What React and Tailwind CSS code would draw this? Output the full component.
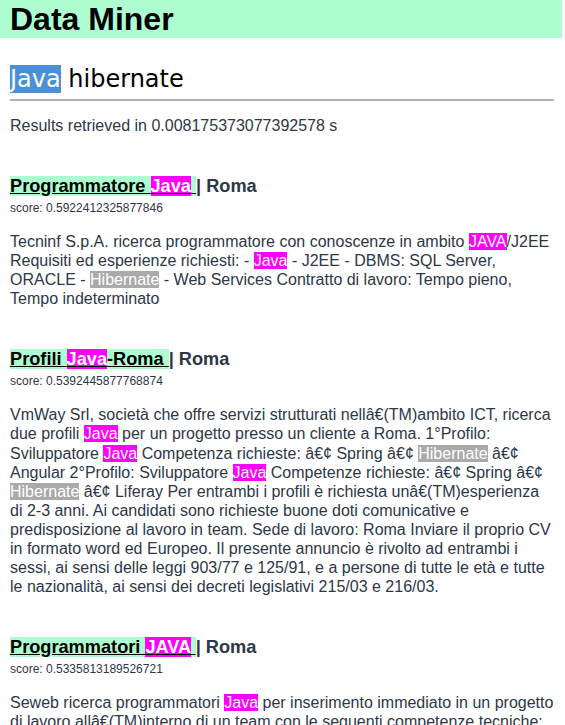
import React from 'react';

const results = [
  {
    title: [['Programmatore '], ['Java', 'hit'], [' ']],
    city: 'Roma',
    score: '0.5922412325877846',
    body: [
      ['Tecninf S.p.A. ricerca programmatore con conoscenze in ambito '],
      ['JAVA', 'hit'],
      ['/J2EE Requisiti ed esperienze richiesti: - '],
      ['Java', 'hit'],
      [' - J2EE - DBMS: SQL Server, ORACLE - '],
      ['Hibernate', 'alt'],
      [' - Web Services Contratto di lavoro: Tempo pieno, Tempo indeterminato'],
    ],
  },
  {
    title: [['Profili '], ['Java', 'hit'], ['-Roma ']],
    city: 'Roma',
    score: '0.5392445877768874',
    body: [
      ['VmWay Srl, società che offre servizi strutturati nellâ€(TM)ambito ICT, ricerca due profili '],
      ['Java', 'hit'],
      [' per un progetto presso un cliente a Roma. 1°Profilo: Sviluppatore '],
      ['Java', 'hit'],
      [' Competenza richieste: â€¢ Spring â€¢ '],
      ['Hibernate', 'alt'],
      [' â€¢ Angular 2°Profilo: Sviluppatore '],
      ['Java', 'hit'],
      [' Competenze richieste: â€¢ Spring â€¢ '],
      ['Hibernate', 'alt'],
      [' â€¢ Liferay Per entrambi i profili è richiesta unâ€(TM)esperienza di 2-3 anni. Ai candidati sono richieste buone doti comunicative e predisposizione al lavoro in team. Sede di lavoro: Roma Inviare il proprio CV in formato word ed Europeo. Il presente annuncio è rivolto ad entrambi i sessi, ai sensi delle leggi 903/77 e 125/91, e a persone di tutte le età e tutte le nazionalità, ai sensi dei decreti legislativi 215/03 e 216/03.'],
    ],
  },
  {
    title: [['Programmatori '], ['JAVA', 'hit'], [' ']],
    city: 'Roma',
    score: '0.5335813189526721',
    body: [
      ['Seweb ricerca programmatori '],
      ['Java', 'hit'],
      [' per inserimento immediato in un progetto di lavoro allâ€(TM)interno di un team con le seguenti competenze tecniche: Java, J2EE, Spring, Hibernate, SQL'],
    ],
  },
];

const Piece = ({ text, kind }) => {
  if (kind === 'hit') return <span className="bg-[#ff00ff] text-white">{text}</span>;
  if (kind === 'alt') return <span className="bg-[#aaaaaa] text-white">{text}</span>;
  return <>{text}</>;
};

const Result = ({ item }) => (
  <div className="mt-[38px]">
    <h3 className="pt-[1px] text-[18.2px] leading-[25px] font-bold text-[#2d3748]">
      <a href="#" className="bg-[#adfdd0] text-black underline">
        {item.title.map(([t, k], i) => <Piece key={i} text={t} kind={k} />)}
      </a>
      | {item.city}
    </h3>
    <div className="mt-[1px] text-[12px] leading-[16px] text-[#2d3748]">score: {item.score}</div>
    <p className="mt-[16px] text-[16px] leading-[19.1px] text-[#2d3748]">
      {item.body.map(([t, k], i) => <Piece key={i} text={t} kind={k} />)}
    </p>
  </div>
);

export default function App() {
  return (
    <div className="w-[562px] font-['Liberation_Sans',Arial,sans-serif]">
      <header className="bg-[#adfdd0] h-[38px] px-[10px]">
        <h1 className="text-[32px] leading-[38px] font-bold text-black">Data Miner</h1>
      </header>
      <main className="pl-[10px] pr-[8px]">
        <div className="mt-[27px] border-b-2 border-[#b0b0b0] pb-[6px] font-['DejaVu_Sans',sans-serif] text-[24px] leading-[28px] text-black">
          <span className="bg-[#4a90d9] text-white">Java</span> hibernate
        </div>
        <div className="mt-[15px] text-[16px] leading-[19px] text-[#2d3748]">
          Results retrieved in 0.008175373077392578 s
        </div>
        {results.map((r, i) => <Result key={i} item={r} />)}
      </main>
    </div>
  );
}
